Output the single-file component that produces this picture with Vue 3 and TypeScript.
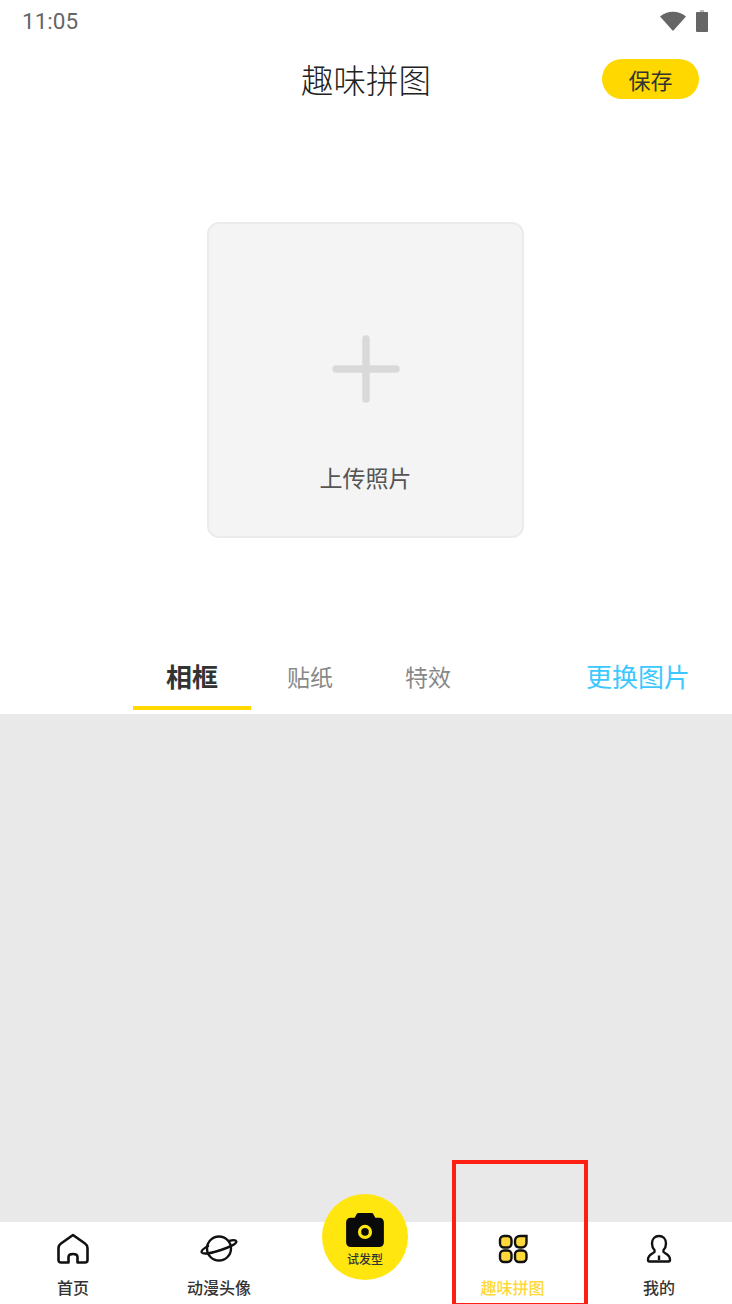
<script setup lang="ts">
const tabs = [
  { label: '相框', active: true },
  { label: '贴纸', active: false },
  { label: '特效', active: false },
]
</script>

<template>
  <div class="page">
    <div class="status">
      <span class="time">11:05</span>
      <div class="status-icons">
        <svg width="26" height="20" viewBox="0 0 26 20"><path d="M0 5.5 C7 -0.8 19 -0.8 26 5.5 L13 20 Z" fill="#666" /></svg>
        <svg width="12" height="22" viewBox="0 0 12 22">
          <path d="M4 0 H8 V2 H4 Z" fill="#bbb" />
          <rect x="0" y="2" width="12" height="20" rx="1" fill="#666" />
        </svg>
      </div>
    </div>

    <header class="title-bar">
      <h1 class="title">趣味拼图</h1>
      <button class="save">保存</button>
    </header>

    <section class="upload-area">
      <div class="upload">
        <svg class="plus" width="68" height="68" viewBox="0 0 68 68">
          <path d="M34 4 V64 M4 34 H64" stroke="#d9d9d9" stroke-width="7.5" stroke-linecap="round" fill="none" />
        </svg>
        <span class="upload-label">上传照片</span>
      </div>
    </section>

    <nav class="tabs">
      <div class="tab-list">
        <div v-for="tab in tabs" :key="tab.label" class="tab" :class="{ active: tab.active }">{{ tab.label }}</div>
      </div>
      <span class="change">更换图片</span>
    </nav>

    <main class="panel"></main>

    <footer class="bottom">
      <div class="nav-item">
        <svg width="32" height="32" viewBox="0 0 32 32" fill="none" stroke="#111" stroke-width="2.6" stroke-linejoin="round">
          <path d="M16 2 L28 10.5 C29.6 11.6 30.5 13 30.5 15 V27 C30.5 28.6 29.6 29.5 28 29.5 H20.5 V24 C20.5 22 19 21 16 21 C13 21 11.5 22 11.5 24 V29.5 H4 C2.4 29.5 1.5 28.6 1.5 27 V15 C1.5 13 2.4 11.6 4 10.5 Z" />
        </svg>
        <span>首页</span>
      </div>
      <div class="nav-item">
        <svg width="38" height="32" viewBox="0 0 38 32" fill="none" stroke="#111" stroke-width="2.4" stroke-linecap="round">
          <circle cx="19" cy="15.5" r="12" />
          <path d="M8 13 C3.5 15.5 1 18 1.8 19.5 C3 21.5 12 20 21 17 C30 14 37 10.5 36.3 8.5 C35.8 7 32.5 7 29 8" />
        </svg>
        <span>动漫头像</span>
      </div>
      <div class="nav-item spacer"></div>
      <div class="nav-item current">
        <svg width="32" height="32" viewBox="0 0 32 32" fill="#ffd93b" stroke="#111" stroke-width="2.4">
          <rect x="3" y="3" width="11.5" height="11.5" rx="4" />
          <path d="M18 8 C18 5 20 3 23 3 H29.5 V9.5 C29.5 12.5 27.5 14.5 24.5 14.5 H23 C20 14.5 18 12.5 18 9.5 Z" />
          <rect x="3" y="17.5" width="11.5" height="11.5" rx="4" />
          <rect x="18" y="17.5" width="11.5" height="11.5" rx="4" />
        </svg>
        <span>趣味拼图</span>
      </div>
      <div class="nav-item">
        <svg width="32" height="32" viewBox="0 0 32 32" fill="none" stroke="#111" stroke-width="2.4" stroke-linejoin="round">
          <path d="M16 3 C20 3 23 6 23 10.5 C23 13.5 22 15.5 20.5 17 V19 C22 20.5 27 21.5 27 26.5 C27 28 26.5 28.5 25.5 28.5 H6.5 C5.5 28.5 5 28 5 26.5 C5 21.5 10 20.5 11.5 19 V17 C10 15.5 9 13.5 9 10.5 C9 6 12 3 16 3 Z" />
          <path d="M16 22.5 V27" />
        </svg>
        <span>我的</span>
      </div>

      <div class="shoot">
        <svg width="38" height="34" viewBox="0 0 40 36">
          <path d="M5 5 H9 L11 1.5 C11.4 0.6 12 0 13 0 H27 C28 0 28.6 0.6 29 1.5 L31 5 H35 C38 5 40 7 40 10 V31 C40 34 38 36 35 36 H5 C2 36 0 34 0 31 V10 C0 7 2 5 5 5 Z" fill="#0a0a0a" />
          <circle cx="20" cy="20" r="7.5" fill="#ffe60f" />
          <circle cx="20" cy="20" r="4" fill="#0a0a0a" />
        </svg>
        <span>试发型</span>
      </div>

      <div class="highlight"></div>
    </footer>
  </div>
</template>

<style>
html, body {
  margin: 0;
  background: #fff;
}
</style>

<style scoped>
.page {
  position: relative;
  width: 732px;
  height: 1304px;
  overflow: hidden;
  display: flex;
  flex-direction: column;
  background: #fff;
  font-family: "Noto Sans CJK SC", "Noto Sans", sans-serif;
}
.status {
  height: 42px;
  flex: none;
  display: flex;
  align-items: center;
  justify-content: space-between;
  padding: 0 24px 0 22px;
  box-sizing: border-box;
}
.time {
  font-family: Roboto, sans-serif;
  font-size: 22.5px;
  color: #666;
}
.status-icons {
  display: flex;
  align-items: center;
  gap: 10px;
}
.title-bar {
  height: 76px;
  flex: none;
  position: relative;
  display: flex;
  align-items: center;
  justify-content: center;
}
.title {
  margin: 0 0 4px;
  font-size: 32.5px;
  font-weight: 300;
  color: #222;
}
.save {
  position: absolute;
  right: 33px;
  top: 17px;
  width: 97px;
  height: 40px;
  border: none;
  border-radius: 20px;
  padding: 0;
  background: #ffd800;
  color: #333;
  font-family: inherit;
  font-size: 22px;
  font-weight: 400;
}
.upload-area {
  height: 534px;
  flex: none;
  padding: 104px 0 0 207px;
  box-sizing: border-box;
}
.upload {
  width: 317px;
  height: 316px;
  box-sizing: border-box;
  border: 2px solid #ebebeb;
  border-radius: 12px;
  background: #f4f4f4;
  display: flex;
  flex-direction: column;
  align-items: center;
}
.plus {
  margin-top: 111px;
}
.upload-label {
  margin-top: 58px;
  font-size: 23px;
  line-height: 32px;
  color: #555;
}
.tabs {
  height: 62px;
  flex: none;
  display: flex;
  align-items: flex-start;
  padding: 0 42px 0 133px;
  box-sizing: border-box;
}
.tab-list {
  display: flex;
}
.tab {
  width: 118px;
  height: 58px;
  box-sizing: border-box;
  padding-top: 6px;
  text-align: center;
  font-size: 23px;
  line-height: 36px;
  font-weight: 400;
  color: #888;
}
.tab.active {
  border-bottom: 4px solid #ffd800;
  font-size: 26px;
  font-weight: 700;
  color: #333;
}
.change {
  margin-left: auto;
  padding-top: 5px;
  font-size: 26px;
  line-height: 38px;
  font-weight: 400;
  color: #3cc8ff;
}
.panel {
  height: 508px;
  flex: none;
  background: #e9e9e9;
}
.bottom {
  position: relative;
  flex: 1;
  display: flex;
  background: #fff;
}
.nav-item {
  display: flex;
  flex-direction: column;
  align-items: center;
  padding-top: 11px;
  font-size: 16px;
  font-weight: 500;
  line-height: 24px;
  color: #333;
}
.nav-item svg {
  height: 32px;
  margin-bottom: 10px;
}
.nav-item:nth-child(1) { width: 146px; }
.nav-item:nth-child(2) { width: 146px; }
.nav-item:nth-child(3) { width: 146px; }
.nav-item:nth-child(4) { width: 149px; }
.nav-item:nth-child(5) { width: 144px; }
.nav-item.current {
  color: #ffd93b;
}
.shoot {
  position: absolute;
  left: 322px;
  top: -28px;
  width: 86px;
  height: 86px;
  border-radius: 50%;
  background: #ffe60f;
  display: flex;
  flex-direction: column;
  align-items: center;
  padding-top: 19px;
  box-sizing: border-box;
  font-size: 12px;
  font-weight: 500;
  line-height: 18px;
  color: #333;
}
.shoot svg {
  margin-bottom: 3px;
}
.highlight {
  position: absolute;
  left: 452px;
  top: -62px;
  width: 136px;
  height: 147px;
  box-sizing: border-box;
  border: 4px solid #ff2015;
}
</style>
